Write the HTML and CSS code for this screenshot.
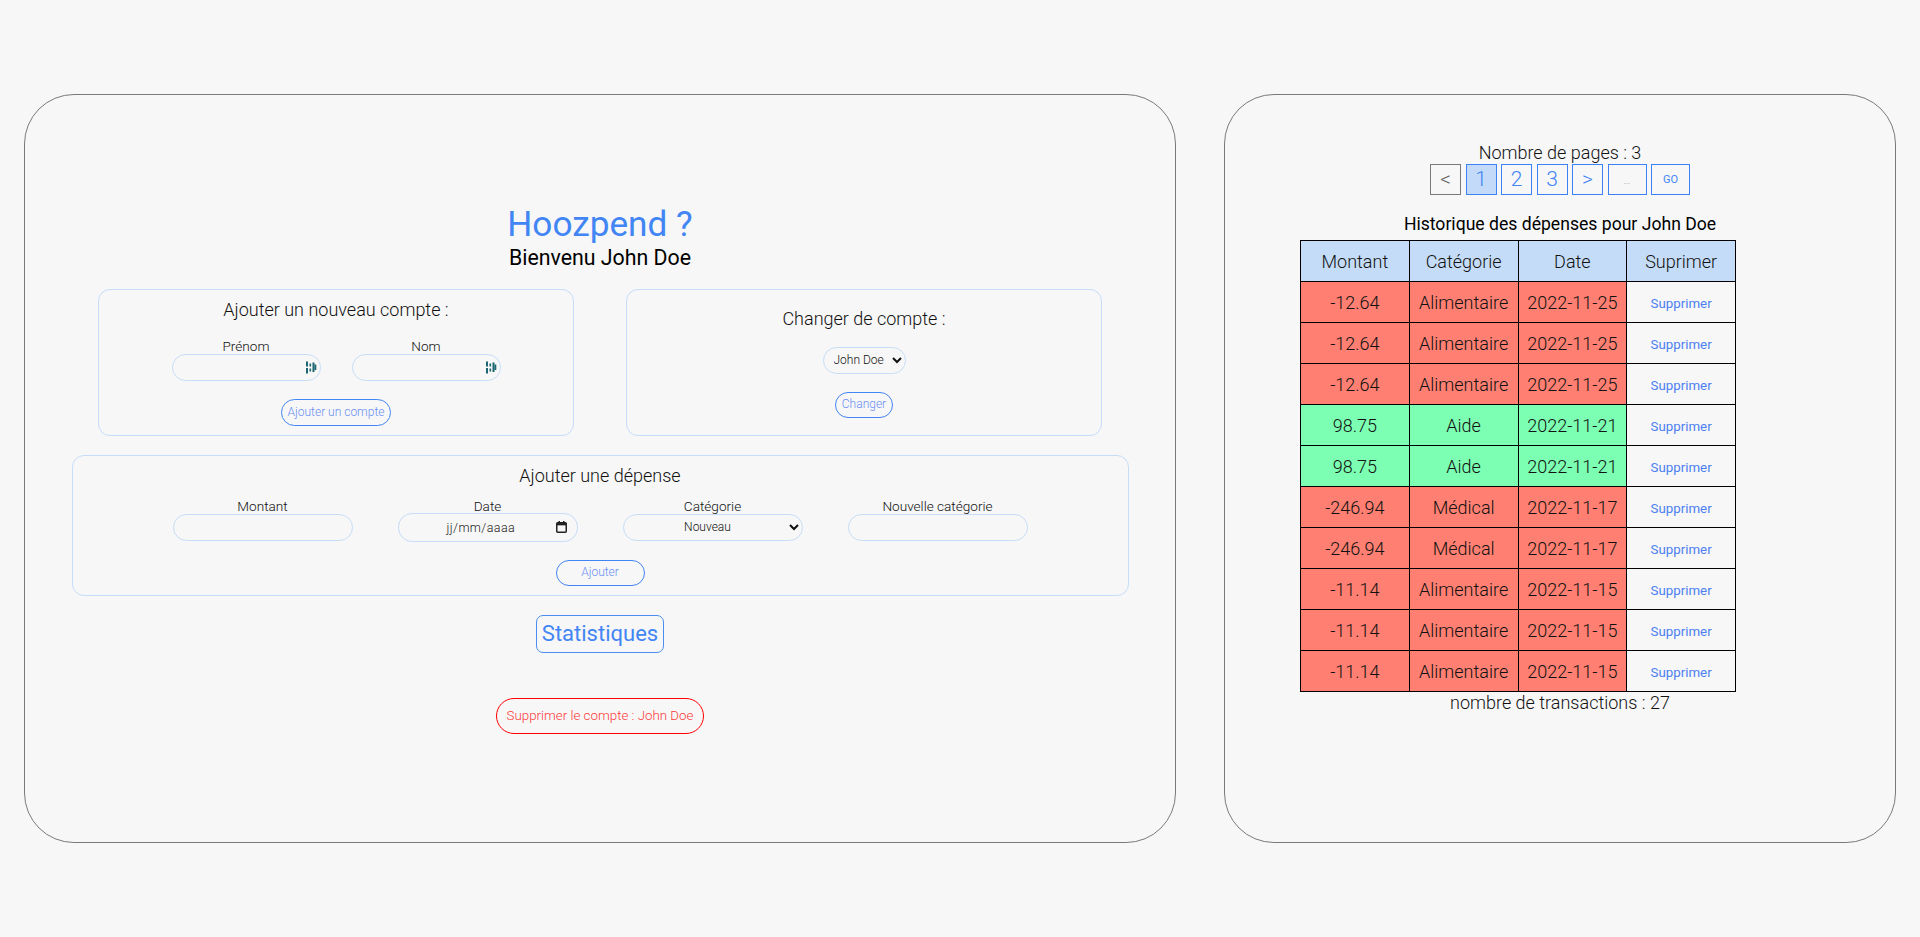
FILE: index.html
```html
<!DOCTYPE html>
<html lang="fr">
<head>
<meta charset="utf-8">
<title>Hoozpend ?</title>
<link rel="stylesheet" href="styles.css">
</head>
<body>
<div class="page">
  <main class="main-card">
    <h1 class="title">Hoozpend ?</h1>
    <p class="welcome">Bienvenu John Doe</p>

    <div class="account-row">
      <section class="box box-new">
        <h2 class="box-title">Ajouter un nouveau compte :</h2>
        <div class="name-fields">
          <label class="field">
            <span class="field-label">Prénom</span>
            <span class="input-wrap">
              <input class="text-input name-input" type="text">
              <svg class="pm-icon" width="11" height="13" viewBox="0 0 11 13" aria-hidden="true">
                <rect x="0" y="0.5" width="2" height="5" fill="#1b6672"/>
                <rect x="0" y="7" width="2" height="5.5" fill="#1b6672"/>
                <rect x="3.5" y="2.5" width="1.6" height="3" fill="#1b6672"/>
                <rect x="3.5" y="7.5" width="1.6" height="3" fill="#1b6672"/>
                <rect x="6.5" y="1.5" width="2" height="9.5" fill="#1b6672"/>
                <rect x="8.5" y="3.5" width="1.8" height="5.5" fill="#1b6672"/>
              </svg>
            </span>
          </label>
          <label class="field">
            <span class="field-label">Nom</span>
            <span class="input-wrap">
              <input class="text-input name-input" type="text">
              <svg class="pm-icon" width="11" height="13" viewBox="0 0 11 13" aria-hidden="true">
                <rect x="0" y="0.5" width="2" height="5" fill="#1b6672"/>
                <rect x="0" y="7" width="2" height="5.5" fill="#1b6672"/>
                <rect x="3.5" y="2.5" width="1.6" height="3" fill="#1b6672"/>
                <rect x="3.5" y="7.5" width="1.6" height="3" fill="#1b6672"/>
                <rect x="6.5" y="1.5" width="2" height="9.5" fill="#1b6672"/>
                <rect x="8.5" y="3.5" width="1.8" height="5.5" fill="#1b6672"/>
              </svg>
            </span>
          </label>
        </div>
        <button class="pill-btn btn-add-account" type="button">Ajouter un compte</button>
      </section>

      <section class="box box-switch">
        <h2 class="box-title">Changer de compte :</h2>
        <select class="pill-select account-select">
          <option>John Doe</option>
        </select>
        <button class="pill-btn btn-change" type="button">Changer</button>
      </section>
    </div>

    <section class="box box-expense">
      <h2 class="box-title">Ajouter une dépense</h2>
      <div class="expense-fields">
        <label class="field">
          <span class="field-label">Montant</span>
          <input class="text-input wide-input" type="text">
        </label>
        <label class="field">
          <span class="field-label">Date</span>
          <span class="date-input">
            <span class="date-text">jj/mm/aaaa</span>
            <svg class="cal-icon" width="11" height="12" viewBox="0 0 11 12" aria-hidden="true">
              <rect x="0.75" y="1.75" width="9.5" height="9.5" rx="1" fill="none" stroke="#222" stroke-width="1.5"/>
              <rect x="0.75" y="1.75" width="9.5" height="2.6" fill="#222"/>
              <rect x="2.5" y="0" width="1.5" height="2.5" fill="#222"/>
              <rect x="7" y="0" width="1.5" height="2.5" fill="#222"/>
            </svg>
          </span>
        </label>
        <label class="field">
          <span class="field-label">Catégorie</span>
          <select class="pill-select wide-select">
            <option>Nouveau</option>
          </select>
        </label>
        <label class="field">
          <span class="field-label">Nouvelle catégorie</span>
          <input class="text-input wide-input" type="text">
        </label>
      </div>
      <button class="pill-btn btn-add" type="button">Ajouter</button>
    </section>

    <button class="stats-btn" type="button">Statistiques</button>
    <button class="delete-btn" type="button">Supprimer le compte : John Doe</button>
  </main>

  <aside class="side-card">
    <p class="pages-count">Nombre de pages : 3</p>
    <nav class="pager">
      <button class="page-btn page-prev" type="button">&lt;</button>
      <button class="page-btn page-current" type="button">1</button>
      <button class="page-btn" type="button">2</button>
      <button class="page-btn" type="button">3</button>
      <button class="page-btn" type="button">&gt;</button>
      <span class="page-btn page-jump">...</span>
      <button class="page-btn page-go" type="button">GO</button>
    </nav>
    <p class="history-title">Historique des dépenses pour John Doe</p>
    <table class="history">
      <thead>
        <tr><th>Montant</th><th>Catégorie</th><th>Date</th><th>Suprimer</th></tr>
      </thead>
      <tbody>
        <tr class="neg"><td>-12.64</td><td>Alimentaire</td><td>2022-11-25</td><td class="del"><a href="#">Supprimer</a></td></tr>
        <tr class="neg"><td>-12.64</td><td>Alimentaire</td><td>2022-11-25</td><td class="del"><a href="#">Supprimer</a></td></tr>
        <tr class="neg"><td>-12.64</td><td>Alimentaire</td><td>2022-11-25</td><td class="del"><a href="#">Supprimer</a></td></tr>
        <tr class="pos"><td>98.75</td><td>Aide</td><td>2022-11-21</td><td class="del"><a href="#">Supprimer</a></td></tr>
        <tr class="pos"><td>98.75</td><td>Aide</td><td>2022-11-21</td><td class="del"><a href="#">Supprimer</a></td></tr>
        <tr class="neg"><td>-246.94</td><td>Médical</td><td>2022-11-17</td><td class="del"><a href="#">Supprimer</a></td></tr>
        <tr class="neg"><td>-246.94</td><td>Médical</td><td>2022-11-17</td><td class="del"><a href="#">Supprimer</a></td></tr>
        <tr class="neg"><td>-11.14</td><td>Alimentaire</td><td>2022-11-15</td><td class="del"><a href="#">Supprimer</a></td></tr>
        <tr class="neg"><td>-11.14</td><td>Alimentaire</td><td>2022-11-15</td><td class="del"><a href="#">Supprimer</a></td></tr>
        <tr class="neg"><td>-11.14</td><td>Alimentaire</td><td>2022-11-15</td><td class="del"><a href="#">Supprimer</a></td></tr>
      </tbody>
    </table>
    <p class="tx-count">nombre de transactions : 27</p>
  </aside>
</div>
</body>
</html>
```

FILE: styles.css
```css
* { box-sizing: border-box; }

html, body {
  margin: 0;
  padding: 0;
}

body {
  background: #f7f7f7;
  font-family: Roboto, "Liberation Sans", sans-serif;
  color: #111;
}

.page {
  height: 100vh;
  display: flex;
  align-items: center;
  justify-content: space-around;
}

.main-card,
.side-card {
  height: 80vh;
  border: 1px solid #7a7a7a;
  border-radius: 50px;
  background: #f7f7f7;
  display: flex;
  flex-direction: column;
  align-items: center;
}

.main-card {
  width: 60%;
  justify-content: center;
}

.side-card {
  width: 35%;
  padding-top: 47px;
}

/* ---------- main card ---------- */

.title {
  margin: 0;
  font-size: 35.2px;
  line-height: 42px;
  font-weight: 400;
  color: #4285f4;
}

.welcome {
  margin: 0;
  font-size: 21.33px;
  line-height: 26px;
  font-weight: 400;
  color: #000;
}

.account-row {
  margin-top: 17.6px;
  display: flex;
  gap: 52px;
}

.box {
  border: 1px solid #c6dcf8;
  border-radius: 12px;
  display: flex;
  flex-direction: column;
  align-items: center;
  justify-content: center;
}

.box-new,
.box-switch {
  width: 476px;
  padding: 8.5px 10px;
}

.box-title {
  margin: 0;
  font-size: 18px;
  line-height: 23px;
  font-weight: 300;
  color: #111;
}

.name-fields {
  margin-top: 17px;
  display: flex;
  gap: 31px;
}

.field {
  display: flex;
  flex-direction: column;
  align-items: center;
}

.field-label {
  font-size: 13.6px;
  line-height: 16px;
  font-weight: 300;
  color: #111;
}

.input-wrap {
  position: relative;
  display: block;
}

.text-input {
  display: block;
  height: 27px;
  border: 1px solid #c6dcf8;
  border-radius: 14px;
  background: transparent;
  font: 300 12px Roboto, "Liberation Sans", sans-serif;
  padding: 0 10px;
  outline: none;
}

.name-input {
  width: 149px;
}

.pm-icon {
  position: absolute;
  right: 4px;
  top: 7px;
}

.pill-btn {
  border: 1px solid #4285f4;
  border-radius: 14px;
  background: transparent;
  color: #6a8ff3;
  font: 300 12px/15px Roboto, "Liberation Sans", sans-serif;
  padding: 5px 5.5px;
  cursor: pointer;
}

.btn-add-account {
  margin-top: 18px;
}

.account-select {
  margin-top: 17px;
  width: 83px;
}

.pill-select {
  height: 27px;
  border: 1px solid #c6dcf8;
  border-radius: 14px;
  background: transparent;
  color: #111;
  font: 300 12px Roboto, "Liberation Sans", sans-serif;
  padding: 0 4px 0 6px;
  outline: none;
}

.btn-change {
  margin-top: 18px;
  padding: 4.5px 5.5px;
}

.box-expense {
  margin-top: 19px;
  width: 1057px;
  padding: 8.6px 10px 9px;
}

.expense-fields {
  margin-top: 10.3px;
  display: flex;
  gap: 45px;
}

.wide-input {
  width: 180px;
}

.wide-select {
  width: 180px;
  text-align: center;
  text-align-last: center;
}

.date-input {
  width: 180px;
  height: 29px;
  margin: -1px 0;
  border: 1px solid #c6dcf8;
  border-radius: 14px;
  display: flex;
  align-items: center;
  justify-content: space-between;
  padding: 0 10px 0 48px;
}

.date-text {
  font-size: 12.5px;
  font-weight: 300;
  letter-spacing: 0.4px;
  color: #222;
}

.cal-icon {
  display: block;
}

.btn-add {
  margin-top: 19px;
  width: 89px;
  padding: 4.5px 0;
}

.stats-btn {
  margin-top: 19px;
  border: 1px solid #4a8ff0;
  border-radius: 7px;
  background: transparent;
  color: #4285f4;
  font: 400 22px/26px Roboto, "Liberation Sans", sans-serif;
  padding: 5px 5px;
  cursor: pointer;
}

.delete-btn {
  margin-top: 45px;
  border: 1px solid #ff0000;
  border-radius: 18px;
  background: transparent;
  color: #ff3b3b;
  font: 300 13.33px/16px Roboto, "Liberation Sans", sans-serif;
  padding: 9px 10px;
  cursor: pointer;
}

/* ---------- side card ---------- */

.pages-count {
  margin: 0;
  font-size: 18px;
  line-height: 21px;
  font-weight: 300;
  color: #111;
}

.pager {
  margin-top: 1px;
  display: flex;
  gap: 4.5px;
}

.page-btn {
  width: 31px;
  height: 31px;
  border: 1px solid #3b82f6;
  background: transparent;
  color: #4285f4;
  font: 300 21px/29px Roboto, "Liberation Sans", sans-serif;
  padding: 0;
  display: flex;
  align-items: center;
  justify-content: center;
  cursor: pointer;
}

.page-prev {
  border-color: #7a7a7a;
  color: #666;
}

.page-current {
  background: #c3dbf8;
}

.page-jump {
  width: 39px;
  font-size: 9px;
  color: #888;
  padding-top: 4px;
}

.page-go {
  width: 39px;
  font-size: 11px;
  font-weight: 400;
}

.history-title {
  margin: 19.7px 0 0;
  font-size: 17.6px;
  line-height: 21px;
  font-weight: 400;
  color: #000;
}

.history {
  margin: 5px 84px 0 0;
  width: 436px;
  table-layout: fixed;
  border-collapse: collapse;
}

.history th,
.history td {
  border: 1px solid #000;
  padding: 0;
  height: 41px;
  line-height: 21px;
  vertical-align: middle;
  text-align: center;
  font-size: 18px;
  font-weight: 300;
  color: #111;
}

.history th {
  background: #c4dcf7;
}

.history .neg td {
  background: #ff8072;
}

.history .pos td {
  background: #7cffb2;
}

.history .neg td.del,
.history .pos td.del {
  background: #f7f7f7;
}

.history .del a {
  font-size: 13.3px;
  line-height: 21px;
  font-weight: 400;
  color: #4c80f1;
  text-decoration: none;
}

.tx-count {
  margin: 0;
  font-size: 18px;
  line-height: 21px;
  font-weight: 300;
  color: #111;
}
```
